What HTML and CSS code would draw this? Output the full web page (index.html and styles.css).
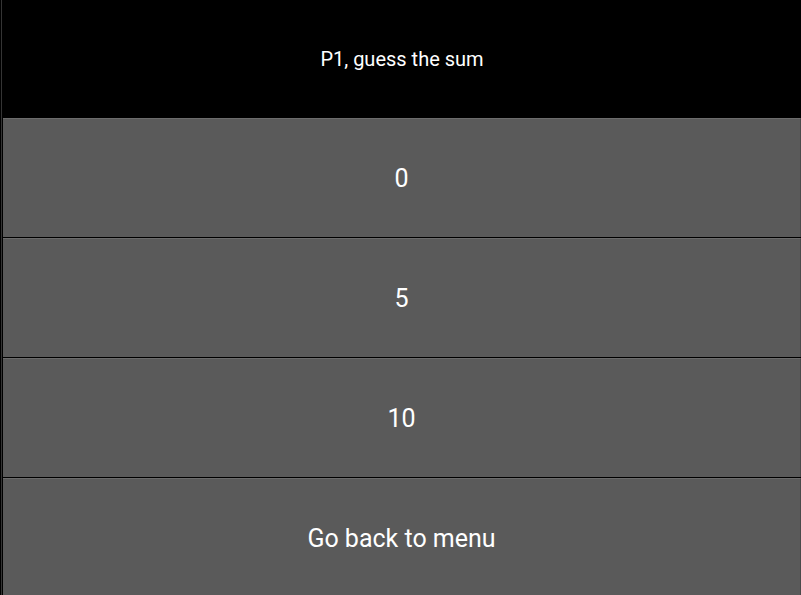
FILE: index.html
```html
<!DOCTYPE html>
<html>
<head>
<meta charset="utf-8">
<link rel="stylesheet" href="styles.css">
</head>
<body>
<div class="screen">
  <div class="edge"></div>
  <div class="content">
    <div class="header">P1, guess the sum</div>
    <div class="buttons">
      <div class="btn">0</div>
      <div class="btn">5</div>
      <div class="btn">10</div>
      <div class="btn">Go back to menu</div>
    </div>
  </div>
</div>
</body>
</html>
```
FILE: styles.css
```css
html, body {
  margin: 0;
  padding: 0;
  background: #000;
  height: 100%;
  overflow: hidden;
}
.screen {
  display: flex;
  height: 595px;
  font-family: Roboto, "Liberation Sans", sans-serif;
  color: #fff;
}
.edge {
  width: 1px;
  margin-left: 1px;
  margin-right: 1px;
  background: #343434;
}
.content {
  flex: 1;
  display: flex;
  flex-direction: column;
}
.header {
  height: 118px;
  flex: none;
  display: flex;
  align-items: center;
  justify-content: center;
  font-size: 20px;
}
.buttons {
  display: flex;
  flex-direction: column;
  gap: 1px;
}
.btn {
  flex: none;
  height: 118px;
  box-sizing: content-box;
  border-top: 1px solid #6c6c6c;
  border-right: 1px solid #4a4a4a;
  background: #5a5a5a;
  display: flex;
  align-items: center;
  justify-content: center;
  font-size: 25px;
  padding-top: 1px;
  height: 117px;
}
```
